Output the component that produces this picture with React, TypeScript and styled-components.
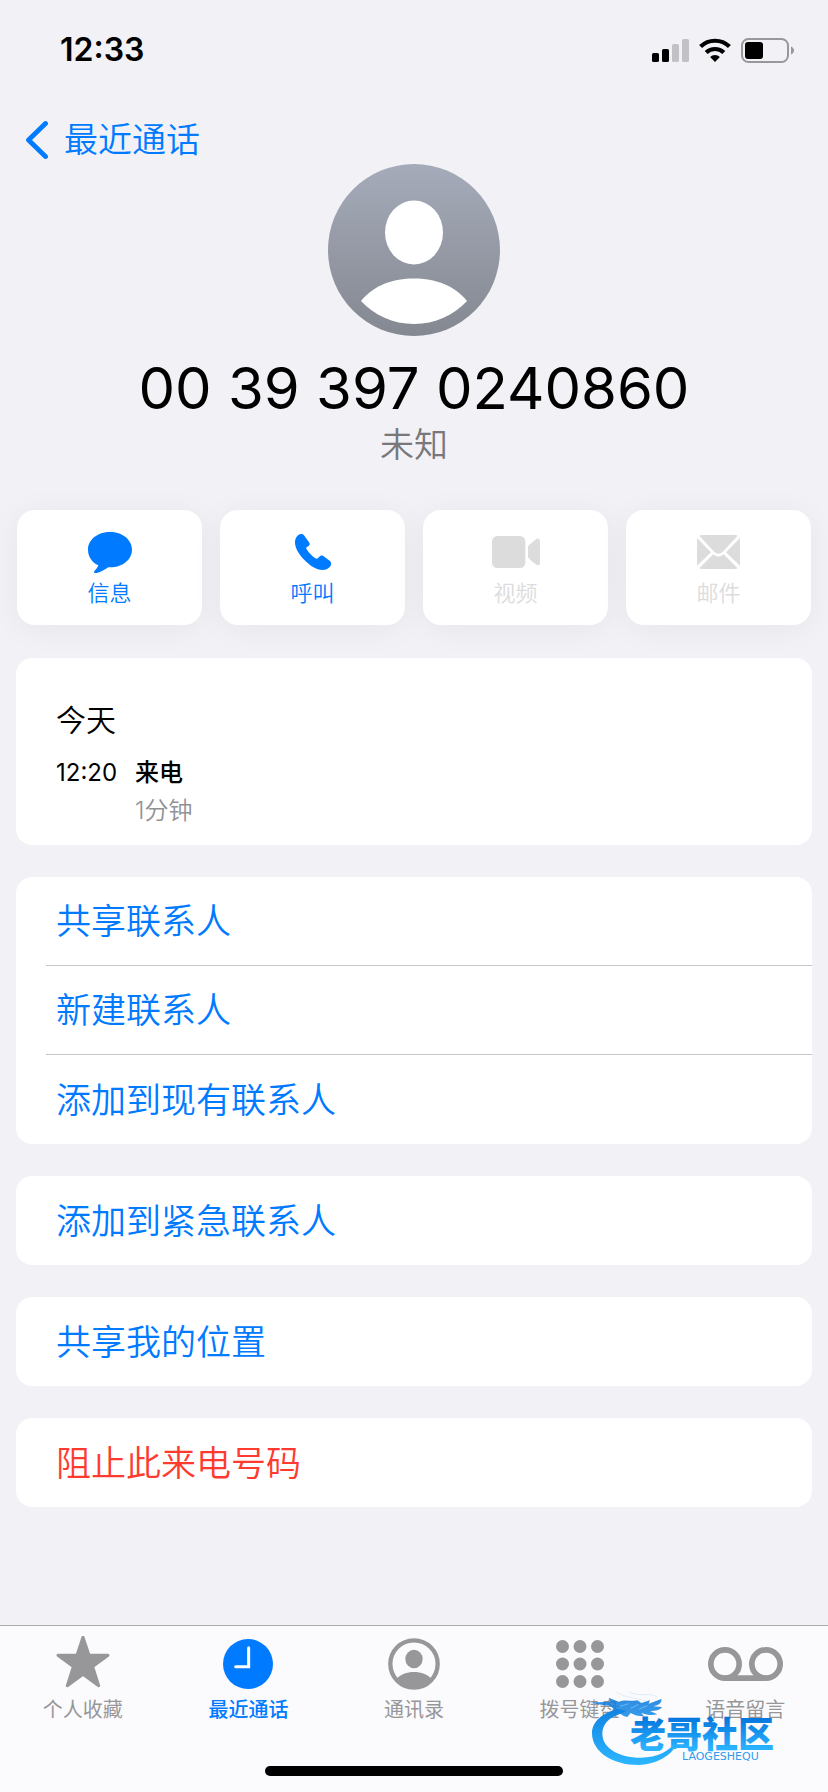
import React from "react";
import styled, { createGlobalStyle, css } from "styled-components";

const BLUE = "#007aff";
const RED = "#ff3b30";
const GREY = "#979799";
const DISABLED = "#dcdcdc";

const GlobalStyle = createGlobalStyle`
  *, *::before, *::after { box-sizing: border-box; }
  body {
    margin: 0;
    background: #f1f1f6;
    color: #000;
    font-family: Inter, "Noto Sans CJK SC", sans-serif;
    -webkit-font-smoothing: antialiased;
  }
  svg { display: block; }
`;

const plainButton = css`
  margin: 0;
  padding: 0;
  border: 0;
  background: none;
  font-family: inherit;
  font-weight: 350;
  cursor: pointer;
`;

const Page = styled.div`
  min-height: 100vh;
  display: flex;
  flex-direction: column;
`;

const StatusBar = styled.div`
  display: flex;
  align-items: center;
  justify-content: space-between;
  height: 100px;
  padding: 0 34px 0 60px;
`;

const Clock = styled.time`
  font-size: 32px;
  font-weight: 600;
  line-height: 40px;
`;

const StatusIcons = styled.div`
  display: flex;
  align-items: center;
  gap: 10px;
`;

const NavBar = styled.nav`
  display: flex;
  padding: 16px 24px 0;
`;

const BackLink = styled.a`
  display: flex;
  align-items: center;
  gap: 16px;
  height: 48px;
  color: ${BLUE};
  font-size: 34px;
  font-weight: 350;
  line-height: 48px;
  text-decoration: none;
`;

const Main = styled.main`
  flex: 1;
  padding: 0 16px 64px;
`;

const Profile = styled.header`
  display: flex;
  flex-direction: column;
  align-items: center;
`;

const Phone = styled.h1`
  margin: 16px 0 0;
  font-size: 58px;
  font-weight: 400;
  line-height: 72px;
  white-space: nowrap;
`;

const Subtitle = styled.p`
  margin: 0;
  color: #78787b;
  font-size: 34px;
  font-weight: 350;
  line-height: 42px;
`;

const Actions = styled.div`
  display: grid;
  grid-template-columns: repeat(4, 1fr);
  gap: 18px;
  margin: 44px 1px 33px;
`;

const ActionButton = styled.button`
  ${plainButton}
  display: flex;
  flex-direction: column;
  align-items: center;
  gap: 4px;
  padding: 20px 0 17px;
  border-radius: 18px;
  background: #fff;
  box-shadow: 0 4px 32px rgba(0, 0, 0, 0.05);
  color: ${BLUE};
  font-size: 22px;
  line-height: 30px;

  &:disabled {
    color: ${DISABLED};
    cursor: default;
  }
`;

const ActionIcon = styled.span`
  display: flex;
  align-items: center;
  height: 44px;
`;

const Card = styled.section`
  border-radius: 16px;
  background: #fff;

  & + & { margin-top: 32px; }
`;

const CallLog = styled(Card)`
  padding: 42px 40px 15px;
`;

const Day = styled.h2`
  margin: 0 0 14px;
  font-size: 30px;
  font-weight: 350;
  line-height: 40px;
`;

const Call = styled.div`
  display: grid;
  grid-template-columns: max-content 1fr;
  column-gap: 18px;
  font-size: 24px;
  line-height: 38px;
`;

const CallKind = styled.strong`
  font-weight: 500;
`;

const Duration = styled.span`
  grid-column: 2;
  color: #929295;
  font-weight: 350;
`;

const RowButton = styled.button<{ $danger?: boolean }>`
  ${plainButton}
  display: block;
  width: calc(100% - 30px);
  height: 89px;
  margin-left: 30px;
  padding-left: 10px;
  color: ${(p) => (p.$danger ? RED : BLUE)};
  font-size: 35px;
  line-height: 48px;
  text-align: left;

  &:not(:last-child) { border-bottom: 1px solid #c6c6c8; }
`;

const TabBar = styled.footer`
  position: relative;
  border-top: 1px solid #a9a9ad;
  background: #fbfbfd;
  padding-bottom: 16px;
`;

const Tabs = styled.nav`
  display: grid;
  grid-template-columns: repeat(5, 1fr);
  padding-top: 10px;
`;

const Tab = styled.a<{ $active?: boolean }>`
  display: flex;
  flex-direction: column;
  align-items: center;
  gap: 6px;
  color: ${(p) => (p.$active ? BLUE : GREY)};
  font-size: 20px;
  font-weight: ${(p) => (p.$active ? 500 : 400)};
  line-height: 24px;
  text-decoration: none;
`;

const TabIcon = styled.span`
  display: flex;
  align-items: center;
  height: 56px;
`;

const HomeIndicator = styled.div`
  width: 36%;
  height: 10px;
  margin: 44px auto 0;
  border-radius: 5px;
  background: #000;
`;

const Brand = styled.div`
  position: absolute;
  right: 15px;
  bottom: 26px;
  pointer-events: none;
`;

const SignalIcon = () => (
  <svg width="37" height="23" viewBox="0 0 37 23" aria-hidden="true">
    <rect x="0" y="14" width="7" height="9" rx="1.6" />
    <rect x="10" y="10" width="7" height="13" rx="1.6" />
    <rect x="20" y="5" width="7" height="18" rx="1.6" fill="#c1c1c6" />
    <rect x="30" y="0" width="7" height="23" rx="1.6" fill="#c1c1c6" />
  </svg>
);

const WifiIcon = () => (
  <svg width="32" height="24" viewBox="0 0 32 24" aria-hidden="true">
    <g fill="none" stroke="#000" strokeWidth="4.2">
      <path d="M1.6 8.6a20.6 20.6 0 0 1 28.8 0" />
      <path d="M7.2 14.6a12.6 12.6 0 0 1 17.6 0" />
    </g>
    <path d="M16 24l-4.9-4.9a7 7 0 0 1 9.8 0z" />
  </svg>
);

const BatteryIcon = () => (
  <svg width="53" height="25" viewBox="0 0 53 25" aria-hidden="true">
    <rect x="1" y="1" width="46" height="23" rx="6.5" fill="none" stroke="#98989c" strokeWidth="2" />
    <rect x="4" y="4" width="18" height="17" rx="3" />
    <path d="M50 8.5c4 1.4 4 6.6 0 8z" fill="#98989c" />
  </svg>
);

const BackIcon = () => (
  <svg width="24" height="38" viewBox="0 0 24 38" aria-hidden="true">
    <path d="M21.5 2.5L4.5 19l17 16.5" fill="none" stroke={BLUE} strokeWidth="4.8" strokeLinecap="round" strokeLinejoin="round" />
  </svg>
);

const Avatar = () => (
  <svg width="172" height="172" viewBox="0 0 172 172" role="img" aria-label="头像">
    <defs>
      <linearGradient id="avatarFill" x1="0" y1="0" x2="0" y2="1">
        <stop offset="0" stopColor="#a5abb9" />
        <stop offset="1" stopColor="#848891" />
      </linearGradient>
    </defs>
    <circle cx="86" cy="86" r="86" fill="url(#avatarFill)" />
    <ellipse cx="86" cy="68.5" rx="29" ry="32" fill="#fff" />
    <path d="M33 137C46 121 65 114.500 86 114.500S126 121 139 137C126 151 107 160 86 160S46 151 33 137z" fill="#fff" />
  </svg>
);

const MessageIcon = () => (
  <svg width="44" height="41" viewBox="0 0 132 123" fill="currentColor" aria-hidden="true">
    <path d="M66 0c37 0 66 23 66 53s-29 53-66 53h-5c-9 6-25 16-36 17-7 1-9-3-5-7 4-4 9-10 11-16C12 91 0 74 0 53 0 23 29 0 66 0z" />
  </svg>
);

const CallIcon = () => (
  <svg width="36" height="36" viewBox="0 0 108 108" fill="currentColor" aria-hidden="true">
    <path d="M9 4C15-1 23-1 27 4L43 26C46 31 43 35 36 39C33 41 33 43 35 46C42 57 51 66 61 73C64 75 67 75 69 72L73 68C77 64 81 64 85 66L105 81C109 84 109 91 106 97C101 104 93 108 83 108C64 108 44 95 26 76C9 58 0 40 0 25C0 16 3 9 9 4z" />
  </svg>
);

const VideoIcon = () => (
  <svg width="48" height="32" viewBox="0 0 144 96" fill="currentColor" aria-hidden="true">
    <rect width="100" height="96" rx="16" />
    <path d="M108 34q0-4 3-7L132 10q5-4 9-1 3 2 3 6v66q0 4-3 6-4 2-8-1L111 68q-3-3-3-7z" />
  </svg>
);

const MailIcon = () => (
  <svg width="43" height="34" viewBox="0 0 129 102" fill="currentColor" aria-hidden="true">
    <path d="M7 2Q10 0 15 0H114Q119 0 122 2L77 51Q65 62 52 51z" />
    <path d="M0 9L42 52L0 92z" />
    <path d="M129 9L87 52L129 92z" />
    <path d="M7 100L49 58Q65 72 80 58L122 100Q119 102 114 102H15Q10 102 7 100z" />
  </svg>
);

const StarIcon = () => (
  <svg width="54" height="56" viewBox="0 0 162 168" fill="currentColor" aria-hidden="true">
    <path d="M81 4L99 58H156L110 92L128 149L81 115L34 149L52 92L6 58H63z" stroke="currentColor" strokeWidth="9" strokeLinejoin="round" />
  </svg>
);

const RecentsIcon = () => (
  <svg width="50" height="50" viewBox="0 0 150 150" aria-hidden="true">
    <circle cx="75" cy="75" r="75" fill="currentColor" />
    <path d="M77 26V83H38" fill="none" stroke="#fff" strokeWidth="9" strokeLinecap="round" />
  </svg>
);

const ContactsIcon = () => (
  <svg width="52" height="52" viewBox="0 0 156 156" aria-hidden="true">
    <circle cx="78" cy="78" r="71" fill="none" stroke="currentColor" strokeWidth="13" />
    <ellipse cx="78" cy="63" rx="26" ry="28" fill="currentColor" />
    <path d="M24 124C38 108 56 102 78 102S118 108 132 124C118 142 98 152 78 152S38 142 24 124z" fill="currentColor" />
  </svg>
);

const KeypadIcon = () => (
  <svg width="48" height="48" viewBox="0 0 144 144" fill="currentColor" aria-hidden="true">
    {[19.5, 72, 124.5].map((y) =>
      [19.5, 72, 124.5].map((x) => <circle key={`${x}-${y}`} cx={x} cy={y} r="19.5" />)
    )}
  </svg>
);

const VoicemailIcon = () => (
  <svg width="75" height="34" viewBox="0 0 225 102" fill="none" stroke="currentColor" strokeWidth="17" aria-hidden="true">
    <circle cx="51" cy="51" r="42.5" />
    <circle cx="174" cy="51" r="42.5" />
    <path d="M51 93.5H174" />
  </svg>
);

const BrandLogo = () => (
  <svg width="223" height="78" viewBox="60 235 669 234" role="img" aria-label="老哥社区">
    <defs>
      <linearGradient id="swoosh" gradientUnits="userSpaceOnUse" x1="0" y1="265" x2="0" y2="465">
        <stop offset="0" stopColor="#0b78dc" />
        <stop offset="1" stopColor="#2cb6ff" />
      </linearGradient>
      <linearGradient id="word" gradientUnits="userSpaceOnUse" x1="0" y1="325" x2="0" y2="415">
        <stop offset="0" stopColor="#0676dc" />
        <stop offset="1" stopColor="#29b2ff" />
      </linearGradient>
    </defs>
    <g fill="none" stroke="#8fc4f0" strokeWidth="2" opacity="0.4">
      <path d="M140 247C165 266 195 262 232 276" />
      <path d="M178 246C205 264 235 246 262 262" />
    </g>
    <path d="M142 298C98 310 66 336 66 370C66 426 126 466 205 466C268 464 318 430 326 386C300 426 262 444 212 444C145 444 97 414 97 372C97 342 118 322 152 312L170 304z" fill="url(#swoosh)" />
    <path d="M60 276C82 280 100 276 122 276L116 264L146 276C166 268 186 276 202 272L214 280L240 272L236 282L274 268C276 280 266 286 250 290L276 292C270 302 256 304 240 304L262 314C246 318 230 316 214 310L222 320C204 320 192 316 182 310L172 322C160 320 150 314 146 304L130 308C132 298 128 292 118 288C98 286 80 284 60 276z" fill="url(#swoosh)" opacity="0.85" />
    <path d="M150 290L176 282M182 296L206 284M208 298L232 288" stroke="#69b9f5" strokeWidth="3" fill="none" />
    <text x="180" y="414" fill="url(#word)" fontFamily="'Noto Sans CJK SC', sans-serif" fontSize="108" fontWeight="900">老哥社区</text>
    <text x="336" y="450" fill="#2e9bee" fontFamily="'DejaVu Sans', sans-serif" fontSize="33">LAOGESHEQU</text>
  </svg>
);

const actions = [
  { label: "信息", Icon: MessageIcon },
  { label: "呼叫", Icon: CallIcon },
  { label: "视频", Icon: VideoIcon, disabled: true },
  { label: "邮件", Icon: MailIcon, disabled: true },
];

const groups = [
  [{ label: "共享联系人" }, { label: "新建联系人" }, { label: "添加到现有联系人" }],
  [{ label: "添加到紧急联系人" }],
  [{ label: "共享我的位置" }],
  [{ label: "阻止此来电号码", danger: true }],
];

const tabs = [
  { label: "个人收藏", href: "#favorites", Icon: StarIcon },
  { label: "最近通话", href: "#recents", Icon: RecentsIcon, active: true },
  { label: "通讯录", href: "#contacts", Icon: ContactsIcon },
  { label: "拨号键盘", href: "#keypad", Icon: KeypadIcon },
  { label: "语音留言", href: "#voicemail", Icon: VoicemailIcon },
];

export default function App() {
  return (
    <Page>
      <GlobalStyle />
      <StatusBar>
        <Clock>12:33</Clock>
        <StatusIcons>
          <SignalIcon />
          <WifiIcon />
          <BatteryIcon />
        </StatusIcons>
      </StatusBar>
      <NavBar>
        <BackLink href="#recents">
          <BackIcon />
          最近通话
        </BackLink>
      </NavBar>
      <Main>
        <Profile>
          <Avatar />
          <Phone>00 39 397 0240860</Phone>
          <Subtitle>未知</Subtitle>
        </Profile>
        <Actions>
          {actions.map(({ label, Icon, disabled }) => (
            <ActionButton key={label} type="button" disabled={disabled}>
              <ActionIcon>
                <Icon />
              </ActionIcon>
              {label}
            </ActionButton>
          ))}
        </Actions>
        <CallLog>
          <Day>今天</Day>
          <Call>
            <time>12:20</time>
            <CallKind>来电</CallKind>
            <Duration>1分钟</Duration>
          </Call>
        </CallLog>
        {groups.map((rows) => (
          <Card key={rows[0].label}>
            {rows.map((row) => (
              <RowButton key={row.label} type="button" $danger={"danger" in row}>
                {row.label}
              </RowButton>
            ))}
          </Card>
        ))}
      </Main>
      <TabBar>
        <Tabs>
          {tabs.map(({ label, href, Icon, active }) => (
            <Tab key={label} href={href} $active={active} aria-current={active ? "page" : undefined}>
              <TabIcon>
                <Icon />
              </TabIcon>
              {label}
            </Tab>
          ))}
        </Tabs>
        <HomeIndicator />
        <Brand>
          <BrandLogo />
        </Brand>
      </TabBar>
    </Page>
  );
}
